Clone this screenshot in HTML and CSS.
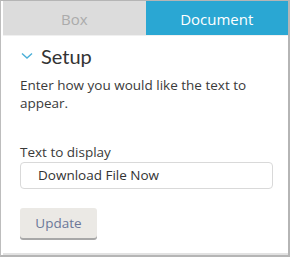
FILE: index.html
```html
<!DOCTYPE html>
<html>
<head>
<meta charset="utf-8">
<link rel="stylesheet" href="styles.css">
</head>
<body>
<div class="frame">
  <div class="tabs">
    <div class="tab">Box</div>
    <div class="tab active">Document</div>
  </div>
  <div class="content">
    <div class="section-title">
      <svg class="chev" width="12" height="8" viewBox="0 0 12 8"><path d="M1 1.5 L6 6 L11 1.5" fill="none" stroke="#4aafd8" stroke-width="1.4"/></svg>
      <span>Setup</span>
    </div>
    <p class="desc">Enter how you would like the text to appear.</p>
    <label class="label">Text to display</label>
    <div class="input">Download File Now</div>
    <button class="btn">Update</button>
  </div>
</div>
</body>
</html>
```
FILE: styles.css
```css
html, body { margin: 0; padding: 0; background: #fff; }
body { font-family: "Open Sans", Lato, sans-serif; }
.frame {
  width: 290px; height: 257px; box-sizing: border-box;
  border-top: 1px solid #b5b5b5;
  border-left: 1px solid #bdbdbd;
  border-right: 2px solid #b5b5b5;
  border-bottom: 2px solid #b5b5b5;
  display: flex; flex-direction: column;
  padding-left: 2px;
}
.tabs { display: flex; height: 34px; border-bottom: 1px solid #f0f0f0; }
.tab {
  flex: 1; display: flex; align-items: center; justify-content: center;
  background: #dcdcdc; color: #ababab; font-size: 15px; padding-top: 2px; box-sizing: border-box;
}
.tab.active { background: #2aa7d3; color: #fff; }
.content { flex: 1; padding: 0 15px 0 17px; border-bottom: 2px solid #e2e2e2; }
.section-title { display: flex; align-items: center; margin-top: 7px; height: 26px; color: #333; font-size: 20px; font-family: Lato, sans-serif; }
.chev { margin-right: 8px; margin-left: 1px; }
.desc { margin: 7px 0 0 0; font-size: 13.5px; line-height: 18px; color: #3a3a3a; }
.label { display: block; margin-top: 31px; font-size: 13.5px; line-height: 18px; color: #3a3a3a; }
.input {
  margin-top: 1px; height: 27px; box-sizing: border-box;
  border: 1px solid #d9d9d9; border-radius: 4px;
  padding-left: 17px; font-size: 13.5px; line-height: 25px; color: #333;
}
.btn {
  display: block; margin-top: 19px; width: 77px; height: 30px;
  border: none; border-radius: 3px; background: #ebe9e5;
  box-shadow: 0 2px 0 #a8a8a8; color: #6c7899; font-family: inherit; font-size: 13.5px;
  padding: 0;
}
```
